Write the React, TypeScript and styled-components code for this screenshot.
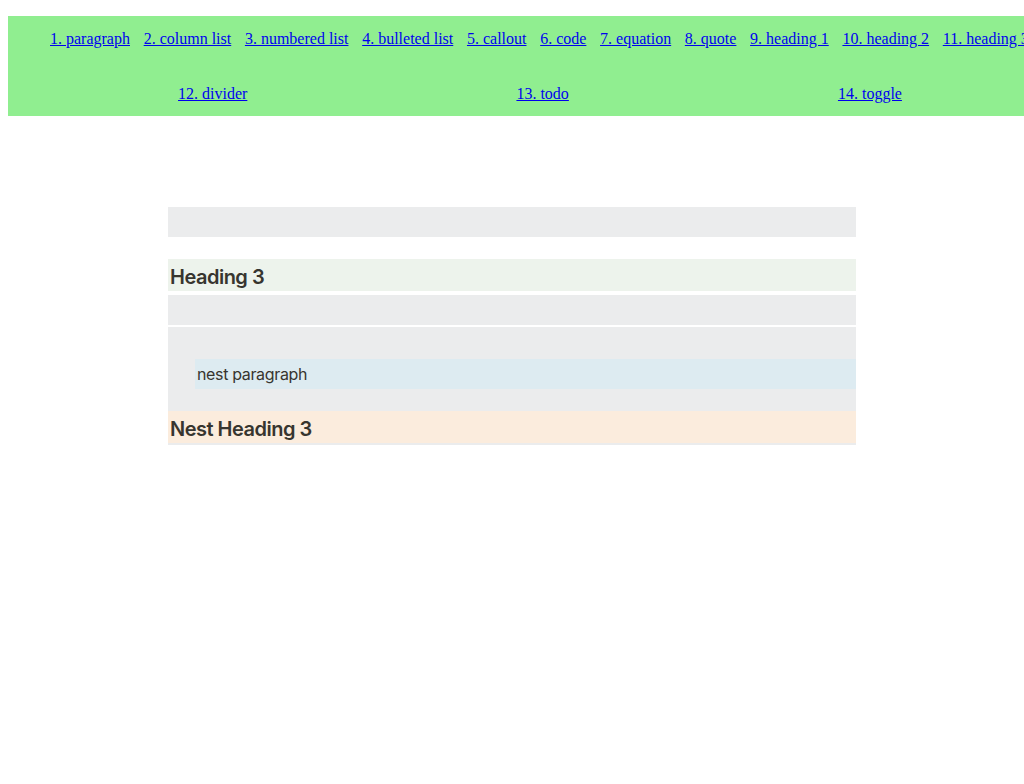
import React from "react";
import styled, { createGlobalStyle } from "styled-components";

const Global = createGlobalStyle`
  html, body { margin: 0; padding: 0; overflow-x: hidden; background: #fff; }
  body { font-family: "Liberation Serif", "Times New Roman", serif; }
`;

const Nav = styled.nav`
  margin: 16px 0 0 8px;
  width: 1040px;
  height: 100px;
  background: #90ee90;
  box-sizing: border-box;
  padding-top: 14px;
  display: flex;
  flex-direction: column;
  row-gap: 36.6px;
`;

const NavRow = styled.div<{ $spread?: boolean }>`
  display: flex;
  width: 993px;
  margin-left: 35.5px;
  box-sizing: border-box;
  justify-content: ${(p) => (p.$spread ? "space-around" : "flex-start")};
  padding-left: ${(p) => (p.$spread ? "0" : "6.5px")};
  gap: ${(p) => (p.$spread ? "0" : "13.7px")};
  white-space: nowrap;
  font-size: 16px;
  line-height: 18.4px;
`;

const NavLink = styled.a`
  color: #0000ee;
  text-decoration: underline;
  font-family: "Liberation Serif", "Times New Roman", serif;
  font-size: 16px;
`;

const Content = styled.main`
  width: 688px;
  margin: 91px auto 0;
  display: flex;
  flex-direction: column;
  font-family: Inter, "Noto Sans", "Liberation Sans", sans-serif;
  color: #37352f;
`;

const colors: Record<string, string> = {
  gray: "#ebeced",
  green: "#edf3ec",
  blue: "#ddebf1",
  orange: "#fbecdd",
};

const Paragraph = styled.div<{ $bg: string; $indent?: number }>`
  background: ${(p) => colors[p.$bg]};
  margin: 0 0 2px ${(p) => p.$indent ?? 0}px;
  padding: 3px 2px;
  min-height: 24px;
  font-size: 16px;
  line-height: 24px;
  letter-spacing: -0.35px;
  box-sizing: content-box;
`;

const Heading3 = styled.h3<{ $bg: string }>`
  background: ${(p) => colors[p.$bg]};
  margin: 20px 0 4px;
  padding: 5px 2px 1px;
  font-size: 20px;
  line-height: 26px;
  font-weight: 600;
  letter-spacing: -0.5px;
  &:last-child { margin-bottom: 0; }
`;

const Container = styled.div<{ $bg: string }>`
  background: ${(p) => colors[p.$bg]};
  margin-bottom: 2px;
  padding-bottom: 2px;
  display: flex;
  flex-direction: column;
`;

const Line = styled.div`
  height: 24px;
  padding: 3px 2px;
  margin-bottom: 2px;
`;

const row1 = [
  "1. paragraph",
  "2. column list",
  "3. numbered list",
  "4. bulleted list",
  "5. callout",
  "6. code",
  "7. equation",
  "8. quote",
  "9. heading 1",
  "10. heading 2",
  "11. heading 3",
];
const row2 = ["12. divider", "13. todo", "14. toggle"];

export default function App() {
  return (
    <>
      <Global />
      <Nav>
        <NavRow>
          {row1.map((t) => (
            <NavLink key={t} href="#">
              {t}
            </NavLink>
          ))}
        </NavRow>
        <NavRow $spread>
          {row2.map((t) => (
            <NavLink key={t} href="#">
              {t}
            </NavLink>
          ))}
        </NavRow>
      </Nav>
      <Content>
        <Paragraph $bg="gray" />
        <Heading3 $bg="green">Heading 3</Heading3>
        <Paragraph $bg="gray" />
        <Container $bg="gray">
          <Line />
          <Paragraph $bg="blue" $indent={27}>
            nest paragraph
          </Paragraph>
          <Heading3 $bg="orange">Nest Heading 3</Heading3>
        </Container>
      </Content>
    </>
  );
}
